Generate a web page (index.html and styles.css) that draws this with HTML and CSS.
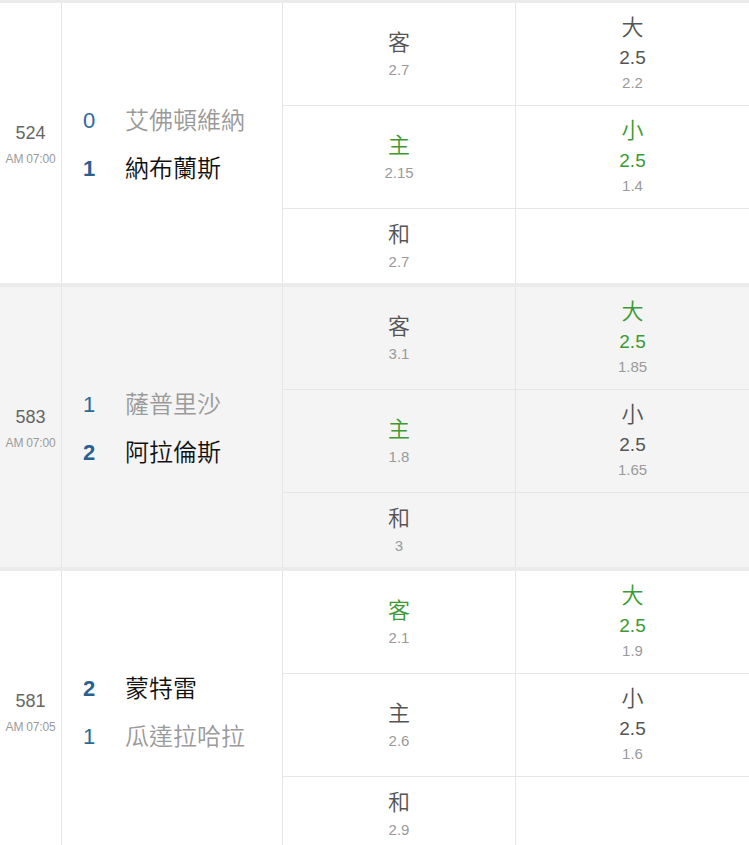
FILE: index.html
```html
<!DOCTYPE html>
<html lang="zh-Hant">
<head>
<meta charset="utf-8">
<title>賽果</title>
<link rel="stylesheet" href="styles.css">
</head>
<body>
<div class="list">
  <div class="match">
    <div class="info"><div class="no">524</div><div class="time">AM 07:00</div></div>
    <div class="teams">
      <div class="team lose"><span class="score">0</span><span class="name">艾佛頓維納</span></div>
      <div class="team win"><span class="score">1</span><span class="name">納布蘭斯</span></div>
    </div>
    <div class="cell r1 c3"><div class="lbl">客</div><div class="odd">2.7</div></div>
    <div class="cell r1 c4 ou"><div class="lbl">大</div><div class="line">2.5</div><div class="odd">2.2</div></div>
    <div class="cell r2 c3 hit"><div class="lbl">主</div><div class="odd">2.15</div></div>
    <div class="cell r2 c4 ou hit"><div class="lbl">小</div><div class="line">2.5</div><div class="odd">1.4</div></div>
    <div class="cell r3 c3"><div class="lbl">和</div><div class="odd">2.7</div></div>
    <div class="cell r3 c4"></div>
  </div>
  <div class="match alt">
    <div class="info"><div class="no">583</div><div class="time">AM 07:00</div></div>
    <div class="teams">
      <div class="team lose"><span class="score">1</span><span class="name">薩普里沙</span></div>
      <div class="team win"><span class="score">2</span><span class="name">阿拉倫斯</span></div>
    </div>
    <div class="cell r1 c3"><div class="lbl">客</div><div class="odd">3.1</div></div>
    <div class="cell r1 c4 ou hit"><div class="lbl">大</div><div class="line">2.5</div><div class="odd">1.85</div></div>
    <div class="cell r2 c3 hit"><div class="lbl">主</div><div class="odd">1.8</div></div>
    <div class="cell r2 c4 ou"><div class="lbl">小</div><div class="line">2.5</div><div class="odd">1.65</div></div>
    <div class="cell r3 c3"><div class="lbl">和</div><div class="odd">3</div></div>
    <div class="cell r3 c4"></div>
  </div>
  <div class="match">
    <div class="info"><div class="no">581</div><div class="time">AM 07:05</div></div>
    <div class="teams">
      <div class="team win"><span class="score">2</span><span class="name">蒙特雷</span></div>
      <div class="team lose"><span class="score">1</span><span class="name">瓜達拉哈拉</span></div>
    </div>
    <div class="cell r1 c3 hit"><div class="lbl">客</div><div class="odd">2.1</div></div>
    <div class="cell r1 c4 ou hit"><div class="lbl">大</div><div class="line">2.5</div><div class="odd">1.9</div></div>
    <div class="cell r2 c3"><div class="lbl">主</div><div class="odd">2.6</div></div>
    <div class="cell r2 c4 ou"><div class="lbl">小</div><div class="line">2.5</div><div class="odd">1.6</div></div>
    <div class="cell r3 c3"><div class="lbl">和</div><div class="odd">2.9</div></div>
    <div class="cell r3 c4"></div>
  </div>
</div>
</body>
</html>
```

FILE: styles.css
```css
* { box-sizing: border-box; margin: 0; padding: 0; }
html, body { background: #fff; }
body {
  margin: 0;
  font-family: "Liberation Sans", "Noto Sans CJK TC", sans-serif;
  color: #555;
  overflow: hidden;
}
.list { margin-top: -1px; }
.match {
  display: grid;
  grid-template-columns: 62px 221px 233px 1fr;
  grid-template-rows: 103px 103px 74px;
  border-top: 4px solid #ebebeb;
  background: #fff;
}
.match.alt { background: #f4f4f4; }
.info {
  grid-row: 1 / 4;
  grid-column: 1;
  border-right: 1px solid #e6e6e6;
  display: flex;
  flex-direction: column;
  align-items: center;
  justify-content: center;
  padding-top: 4px;
}
.no { font-size: 18px; line-height: 28px; color: #666; }
.time { font-size: 12px; line-height: 24px; color: #9a9a9a; letter-spacing: -0.2px; }
.teams {
  grid-row: 1 / 4;
  grid-column: 2;
  border-right: 1px solid #e6e6e6;
  display: flex;
  flex-direction: column;
  justify-content: center;
  padding-left: 21px;
  padding-top: 4px;
}
.team { display: flex; align-items: center; height: 48px; }
.score { width: 42px; font-size: 22px; color: #2d6a9c; }
.name { font-size: 24px; line-height: 48px; font-weight: 350; }
.win .score { font-weight: bold; color: #2a6091; }
.win .name { color: #111; }
.lose .name { color: #9a9a9a; }
.cell {
  display: flex;
  flex-direction: column;
  align-items: center;
  justify-content: center;
  text-align: center;
}
.c3 { grid-column: 3; border-right: 1px solid #e6e6e6; }
.c4 { grid-column: 4; }
.r1 { grid-row: 1; border-bottom: 1px solid #e6e6e6; }
.r2 { grid-row: 2; border-bottom: 1px solid #e6e6e6; }
.r3 { grid-row: 3; }
.lbl { font-size: 22px; line-height: 30px; color: #555; font-weight: 350; }
.odd { font-size: 15px; line-height: 24px; color: #9a9a9a; }
.cell.c3 { padding-top: 2px; }
.ou { padding-bottom: 3px; }
.ou .line { font-size: 19px; line-height: 30px; color: #555; }
.ou .odd { line-height: 20px; }
.r3 { padding-top: 2px; }
.hit .lbl, .hit .line { color: #3c9a32; }
```
